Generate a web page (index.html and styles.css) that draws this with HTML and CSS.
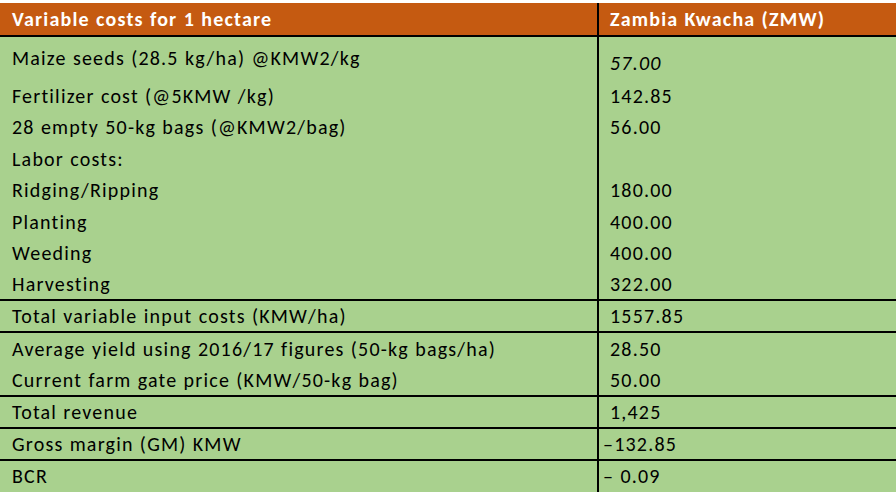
FILE: index.html
```html
<!DOCTYPE html>
<html>
<head>
<meta charset="utf-8">
<link rel="stylesheet" href="styles.css">
</head>
<body>
<div class="sheet">
  <div class="row head"><div class="c1">Variable costs for 1 hectare</div><div class="c2">Zambia Kwacha (ZMW)</div></div>
  <div class="row first"><div class="c1">Maize seeds (28.5 kg/ha) @KMW2/kg</div><div class="c2 ital">57.00</div></div>
  <div class="row"><div class="c1">Fertilizer cost (@5KMW /kg)</div><div class="c2">142.85</div></div>
  <div class="row"><div class="c1">28 empty 50-kg bags (@KMW2/bag)</div><div class="c2">56.00</div></div>
  <div class="row"><div class="c1">Labor costs:</div><div class="c2"></div></div>
  <div class="row"><div class="c1">Ridging/Ripping</div><div class="c2">180.00</div></div>
  <div class="row"><div class="c1">Planting</div><div class="c2">400.00</div></div>
  <div class="row"><div class="c1">Weeding</div><div class="c2">400.00</div></div>
  <div class="row ruled"><div class="c1">Harvesting</div><div class="c2">322.00</div></div>
  <div class="row ruled"><div class="c1">Total variable input costs (KMW/ha)</div><div class="c2">1557.85</div></div>
  <div class="row"><div class="c1">Average yield using 2016/17 figures (50-kg bags/ha)</div><div class="c2">28.50</div></div>
  <div class="row ruled"><div class="c1">Current farm gate price (KMW/50-kg bag)</div><div class="c2">50.00</div></div>
  <div class="row ruled"><div class="c1">Total revenue</div><div class="c2">1,425</div></div>
  <div class="row ruled"><div class="c1">Gross margin (GM) KMW</div><div class="c2 neg">–132.85</div></div>
  <div class="row last"><div class="c1">BCR</div><div class="c2 neg">– 0.09</div></div>
</div>
</body>
</html>
```
FILE: styles.css
```css
html, body {
  margin: 0;
  padding: 0;
  background: #ffffff;
}
.sheet {
  margin-top: 3px;
  width: 896px;
  background: #a9d18e;
  font-family: Carlito, Calibri, Lato, "Liberation Sans", sans-serif;
  font-size: 20px;
  letter-spacing: 1.2px;
  word-spacing: 0.5px;
  color: #000;
}
.row {
  display: grid;
  grid-template-columns: 599px 1fr;
  height: 31.5px;
  box-sizing: border-box;
}
.c1, .c2 {
  display: flex;
  align-items: center;
  white-space: nowrap;
}
.c1 {
  padding-left: 12px;
  border-right: 2px solid #000;
}
.c2 {
  padding-left: 11px;
}
.head {
  height: 34px;
  background: #c55a11;
  color: #fff;
  font-weight: bold;
  border-bottom: 2px solid #000;
}
.head .c1, .head .c2 {
  padding-bottom: 1px;
}
.first {
  height: 43px;
}
.first .c1 {
  padding-bottom: 2px;
}
.first .c2 {
  padding-top: 8px;
}
.ital {
  font-style: italic;
}
.ruled {
  border-bottom: 2px solid #000;
  height: 32px;
}
.neg {
  padding-left: 4px;
}
.last {
  height: 31px;
}
```
